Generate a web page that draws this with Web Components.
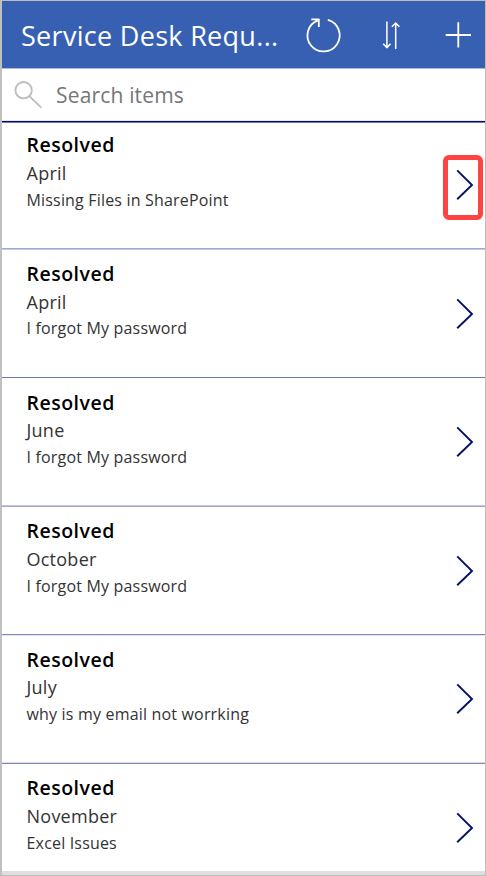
<!DOCTYPE html>
<html lang="en">
<head>
<meta charset="utf-8">
<title>Service Desk Requests</title>
<style>
html, body { margin: 0; height: 100%; }
body { font-family: "Open Sans", "Noto Sans", sans-serif; overflow: hidden; }
</style>
</head>
<body>
<desk-app></desk-app>
<script>
class AppHeader extends HTMLElement {
  constructor() {
    super();
    this.attachShadow({ mode: 'open' }).innerHTML = `
<style>
:host { display: flex; height: 68px; background: #3860b2; color: #fff; border-bottom: 1px solid #a9bbde; box-sizing: border-box; }
h1 { margin: 0; padding-left: 19px; width: 266px; font-size: 27px; font-weight: 400; line-height: 70px; letter-spacing: .3px; white-space: nowrap; }
svg { display: block; flex: none; width: 198px; height: 67px; fill: none; stroke: #fff; }
</style>
<h1><slot></slot></h1>
<svg viewBox="287 1 198 67">
  <path stroke-width="1.8" d="M327.8 19.8A16.1 16.1 0 1 1 317.8 20.3M311.3 19.4H319M318.8 18.7V27"/>
  <path stroke-width="1.5" d="M386.9 21.5V48M383.2 43.8L386.9 47.6L390.6 43.8M395.7 49V22.7M391.9 26.8L395.7 23L399.4 26.8"/>
  <path stroke-width="1.8" d="M445.7 35H471M458.3 22.3V47.5"/>
</svg>`;
  }
}
class SearchBar extends HTMLElement {
  constructor() {
    super();
    this.attachShadow({ mode: 'open' }).innerHTML = `
<style>
:host { display: flex; height: 54px; box-sizing: border-box; background: #fff; color: #767676; border-bottom: 1px solid #7179b0; box-shadow: inset 0 -1px #000c63, inset 0 -2px #e3e5ef; }
svg { display: block; width: 54px; height: 51px; fill: none; stroke: #bdbdbd; stroke-width: 1.8; }
span { font-size: 21px; line-height: 53px; letter-spacing: .17px; }
</style>
<svg viewBox="2 69 54 51"><circle cx="23.6" cy="90.2" r="8.2"/><path d="M29.6 96.4L41.3 107.7"/></svg>
<span><slot></slot></span>`;
  }
}
class RequestItem extends HTMLElement {
  constructor() {
    super();
    this.attachShadow({ mode: 'open' }).innerHTML = `
<style>
:host { display: flex; justify-content: space-between; position: relative; box-sizing: border-box; color: #333; background: #fff; }
:host([flagged])::after { content: ""; position: absolute; left: 441px; top: 32px; width: 40px; height: 65px; box-sizing: border-box; border: 5px solid #ff4343; border-radius: 6px; }
.text { padding: calc(9px + var(--shift)) 0 0 24.5px; white-space: nowrap; }
.status { height: 27.6px; font-size: 19.5px; font-weight: 600; line-height: 27px; color: #000; letter-spacing: .5px; }
.month { height: 27.8px; font-size: 18px; line-height: 28px; letter-spacing: .25px; }
.topic { font-size: 16px; line-height: 26px; letter-spacing: .18px; }
svg { display: block; flex: none; width: 40px; height: 60px; margin: calc(32.6px + var(--shift)) 0 0; fill: none; stroke: #00126b; stroke-width: 1.9; }
</style>
<div class="text">
  <div class="status"><slot name="status"></slot></div>
  <div class="month"><slot name="month"></slot></div>
  <div class="topic"><slot name="topic"></slot></div>
</div>
<svg viewBox="0 0 40 60"><path d="M12.2 15.4L27 30L12.2 44.2"/></svg>`;
  }
}
class DeskApp extends HTMLElement {
  constructor() {
    super();
    // month, topic, height, text shift, upper and lower line colours
    const rows = [
      ['April', 'Missing Files in SharePoint', 127, -.6, '#a0a8d2', '#c6cae2'],
      ['April', 'I forgot My password', 128, 1, '#ffffff', '#6f78ae'],
      ['June', 'I forgot My password', 129, 1.6, '#c3c7e1', '#a0a8d2'],
      ['October', 'I forgot My password', 129, 1.2, '#7f88bf', '#e0e2f0'],
      ['July', 'why is my email not worrking', 128, .8, '#d8dbeb', '#8088b8'],
      ['November', 'Excel Issues', 107, 1.4, '#ffffff', '#ffffff']
    ];
    this.attachShadow({ mode: 'open' }).innerHTML = `
<style>
:host { display: flex; flex-direction: column; width: 486px; height: 876px; box-sizing: border-box; border: 1px solid #bcbcbc; border-left: 2px solid #c0c0c0; background: #dfdfdf; }
app-header, search-bar, request-item { flex: none; }
</style>
<app-header>Service Desk Requ...</app-header>
<search-bar>Search items</search-bar>
${rows.map(([m, t, h, s, a, b], i) => `<request-item ${i ? '' : 'flagged'} style="height:${h}px;--shift:${s}px;border-bottom:1px solid ${b};box-shadow:inset 0 -1px ${a}"><span slot="status">Resolved</span><span slot="month">${m}</span><span slot="topic">${t}</span></request-item>`).join('')}`;
  }
}
customElements.define('app-header', AppHeader);
customElements.define('search-bar', SearchBar);
customElements.define('request-item', RequestItem);
customElements.define('desk-app', DeskApp);
</script>
</body>
</html>
